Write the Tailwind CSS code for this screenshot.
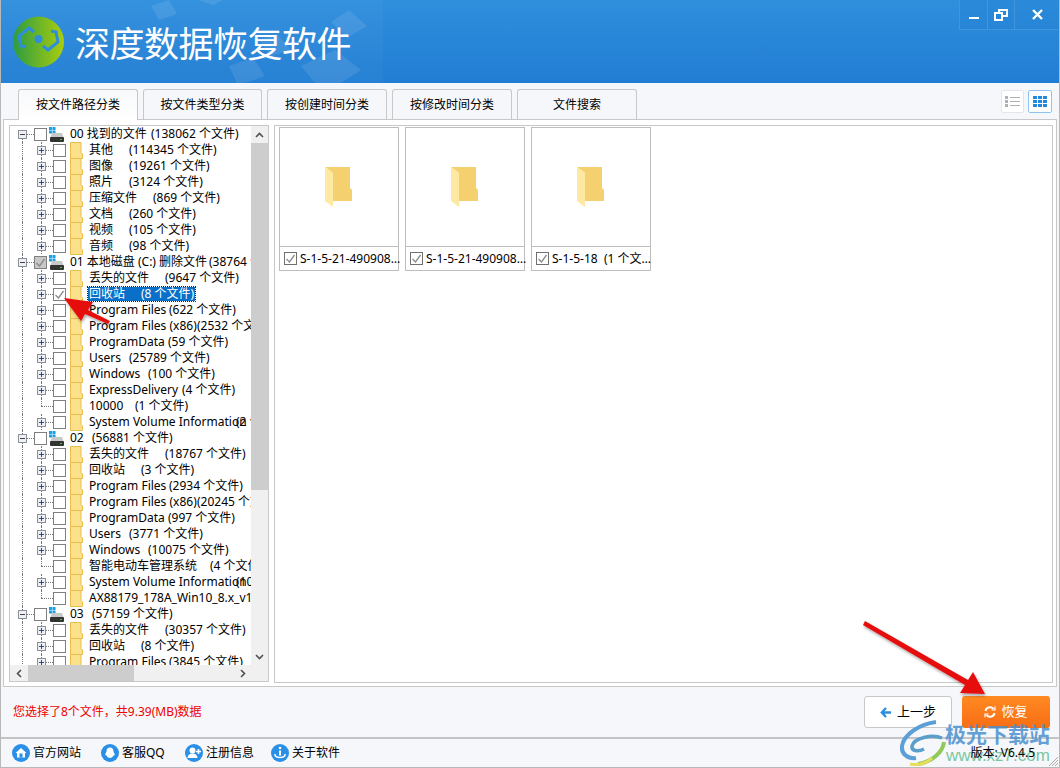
<!doctype html>
<html lang="zh">
<head>
<meta charset="UTF-8" />
<title>深度数据恢复软件</title>
<script src="https://cdn.jsdelivr.net/npm/@tailwindcss/browser@4"></script>
</head>
<body class="bg-white">
<div class="relative w-[1060px] h-[768px] overflow-hidden flex flex-col bg-[#f5f7fa] text-[12px] text-black font-['Noto_Sans','Noto_Sans_CJK_SC',sans-serif] border-l border-r border-b border-[#b8b8b8]">

    <!-- header -->
    <div class="relative h-[83px] shrink-0 flex items-center bg-gradient-to-b from-[#2f8fdd] to-[#217dd3]">
        <svg class="absolute left-0 top-0" width="382" height="83" viewBox="0 0 382 83">
            <rect width="382" height="83" fill="#fff" opacity="0.03" />
            <g fill="#fff" opacity="0.09">
                <polygon points="150,6 168,0 176,14 158,20" />
                <polygon points="198,0 222,0 212,5" />
                <polygon points="330,22 348,10 366,26 346,38" />
                <polygon points="228,66 252,58 264,76 244,83 236,83" />
                <polygon points="300,66 334,50 360,70 340,83 314,83" />
                <polygon points="258,40 276,34 290,50 270,56" />
            </g>
        </svg>
        <svg class="relative ml-[11px] shrink-0" width="54" height="54" viewBox="11 17 54 54">
            <defs>
                <linearGradient id="lg" x1="0" y1="0" x2="1" y2="0">
                    <stop offset="0" stop-color="#2c9c42" />
                    <stop offset="1" stop-color="#aacd0e" />
                </linearGradient>
            </defs>
            <circle cx="37.5" cy="44" r="25.5" fill="url(#lg)" />
            <circle cx="37.5" cy="41" r="4" fill="#2f8edb" />
            <polyline points="50,33 55,34 57,44 47,52 42,48" fill="none" stroke="#2f8edb" stroke-width="3" />
            <polyline points="25,49 20,48 18,38 28,30 33,34" fill="none" stroke="#2f8edb" stroke-width="3" />
        </svg>
        <h1 class="relative ml-[9px] text-[35px] leading-none text-white font-['Noto_Sans_CJK_SC',sans-serif] font-normal tracking-[-0.5px]">深度数据恢复软件</h1>

        <!-- window buttons -->
        <div class="absolute right-0 top-0 h-[30px] flex border-l border-b border-[#4a9be0]/70 bg-[#217fd2]/30">
            <div class="w-[28px] flex items-center justify-center border-r border-[#4a9be0]/70">
                <div class="w-[10px] h-[2px] mt-[6px] bg-white"></div>
            </div>
            <div class="w-[27px] flex items-center justify-center border-r border-[#4a9be0]/70">
                <svg width="14" height="12" viewBox="0 0 14 12" fill="none" stroke="#fff" stroke-width="2">
                    <rect x="5" y="1" width="8" height="6" />
                    <rect x="1" y="4" width="7" height="7" fill="#2585d6" />
                </svg>
            </div>
            <div class="w-[44px] flex items-center justify-center">
                <svg width="11" height="11" viewBox="0 0 11 11" stroke="#fff" stroke-width="2.4">
                    <path d="M1 1 10 10M10 1 1 10" />
                </svg>
            </div>
        </div>
    </div>

    <!-- tabs -->
    <div class="relative h-[36px] shrink-0 flex items-end pl-[17px] gap-[5px] text-[12px] z-10">
        <div class="w-[120px] h-[31px] mb-[-1px] flex items-center justify-center bg-gradient-to-b from-[#f8f9fb] to-white border border-b-0 border-[#c8c8c8] rounded-t-[3px]">按文件路径分类</div>
        <div class="w-[119px] h-[30px] flex items-center justify-center bg-[#f5f7fa] border border-b-0 border-[#c8c8c8] rounded-t-[3px]">按文件类型分类</div>
        <div class="w-[120px] h-[30px] flex items-center justify-center bg-[#f5f7fa] border border-b-0 border-[#c8c8c8] rounded-t-[3px]">按创建时间分类</div>
        <div class="w-[120px] h-[30px] flex items-center justify-center bg-[#f5f7fa] border border-b-0 border-[#c8c8c8] rounded-t-[3px]">按修改时间分类</div>
        <div class="w-[120px] h-[30px] flex items-center justify-center bg-[#f5f7fa] border border-b-0 border-[#c8c8c8] rounded-t-[3px]">文件搜索</div>
        <div class="ml-auto mr-[7px] mb-[6px] flex gap-[4px]">
            <div class="w-[23px] h-[23px] flex items-center justify-center bg-white border border-[#e4e6ea] rounded-[2px]">
                <svg width="15" height="12" viewBox="0 0 15 12">
                    <g fill="#adb0b5"><rect x="0" y="0" width="3" height="3" /><rect x="0" y="4" width="3" height="3" /><rect x="0" y="8" width="3" height="3" /></g>
                    <g fill="#adb0b5"><rect x="5" y="1" width="10" height="1" /><rect x="5" y="5" width="10" height="1" /><rect x="5" y="9" width="10" height="1" /></g>
                </svg>
            </div>
            <div class="w-[24px] h-[23px] flex items-center justify-center bg-white border border-[#8cc4f5] rounded-[2px]">
                <svg width="14" height="11" viewBox="0 0 14 11" fill="#2288e0">
                    <rect x="0" y="0" width="4" height="3" /><rect x="5" y="0" width="4" height="3" /><rect x="10" y="0" width="4" height="3" />
                    <rect x="0" y="4" width="4" height="3" /><rect x="5" y="4" width="4" height="3" /><rect x="10" y="4" width="4" height="3" />
                    <rect x="0" y="8" width="4" height="3" /><rect x="5" y="8" width="4" height="3" /><rect x="10" y="8" width="4" height="3" />
                </svg>
            </div>
        </div>
    </div>

    <!-- main frame -->
    <div class="h-[568px] shrink-0 ml-[2px] mr-[2px] flex gap-[5px] pl-[5px] pr-[4px] pt-[5px] bg-white border border-[#c8c8c8]">
        <!-- tree panel -->
        <div class="w-[260px] h-[557px] shrink-0 flex flex-col border border-[#c8c8c8]">
            <div class="flex h-[539px] shrink-0">
                <div id="tree" class="w-[241px] h-[539px] overflow-hidden bg-white"></div>
                <div class="w-[17px] flex flex-col bg-[#f0f0f0]">
                    <div class="h-[17px] flex items-center justify-center">
                        <svg width="9" height="6" viewBox="0 0 9 6" fill="none" stroke="#505050" stroke-width="1.6"><path d="M1 5 4.500 1.500 8 5" /></svg>
                    </div>
                    <div class="h-[347px] bg-[#cdcdcd]"></div>
                    <div class="flex-1"></div>
                    <div class="h-[17px] flex items-center justify-center">
                        <svg width="9" height="6" viewBox="0 0 9 6" fill="none" stroke="#505050" stroke-width="1.6"><path d="M1 1 4.500 4.500 8 1" /></svg>
                    </div>
                </div>
            </div>
            <div class="h-[16px] flex bg-[#f0f0f0]">
                <div class="w-[18px] flex items-center justify-center">
                    <svg width="6" height="9" viewBox="0 0 6 9" fill="none" stroke="#505050" stroke-width="1.6"><path d="M5 1 1.500 4.500 5 8" /></svg>
                </div>
                <div class="w-[106px] bg-[#cdcdcd]"></div>
                <div class="w-[117px] flex items-center justify-end pr-[5px]">
                    <svg width="6" height="9" viewBox="0 0 6 9" fill="none" stroke="#505050" stroke-width="1.6"><path d="M1 1 4.500 4.500 1 8" /></svg>
                </div>
            </div>
        </div>

        <!-- file panel -->
        <div class="w-[779px] h-[558px] shrink-0 flex gap-[6px] items-start pl-[4px] pt-[1px] bg-white border border-[#c8c8c8]">
            <div class="w-[120px] h-[144px] flex flex-col border border-[#bdbdbd]">
                <div class="h-[119px] flex items-center justify-center border-b border-[#bdbdbd]">
                    <svg width="28" height="41" viewBox="0 0 28 41"><polygon points="0,0 25,0 25,21 27,23 27,34 8,34 8,6" fill="#f4d06f" /><polygon points="0,0 8,6 8,40 0,34" fill="#fde9a2" /></svg>
                </div>
                <div class="flex-1 flex items-center pl-[4px]">
                    <span class="w-[13px] h-[13px] shrink-0 flex items-center justify-center border border-[#707070]"><svg width="11" height="11" viewBox="0 0 11 11" fill="none" stroke="#8a8a8a" stroke-width="1.300"><path d="M1.500 6 4.500 9 9.500 2" /></svg></span>
                    <span class="ml-[3px] whitespace-nowrap">S-1-5-21-490908…</span>
                </div>
            </div>
            <div class="w-[120px] h-[144px] flex flex-col border border-[#bdbdbd]">
                <div class="h-[119px] flex items-center justify-center border-b border-[#bdbdbd]">
                    <svg width="28" height="41" viewBox="0 0 28 41"><polygon points="0,0 25,0 25,21 27,23 27,34 8,34 8,6" fill="#f4d06f" /><polygon points="0,0 8,6 8,40 0,34" fill="#fde9a2" /></svg>
                </div>
                <div class="flex-1 flex items-center pl-[4px]">
                    <span class="w-[13px] h-[13px] shrink-0 flex items-center justify-center border border-[#707070]"><svg width="11" height="11" viewBox="0 0 11 11" fill="none" stroke="#8a8a8a" stroke-width="1.300"><path d="M1.500 6 4.500 9 9.500 2" /></svg></span>
                    <span class="ml-[3px] whitespace-nowrap">S-1-5-21-490908…</span>
                </div>
            </div>
            <div class="w-[120px] h-[144px] flex flex-col border border-[#bdbdbd]">
                <div class="h-[119px] flex items-center justify-center border-b border-[#bdbdbd]">
                    <svg width="28" height="41" viewBox="0 0 28 41"><polygon points="0,0 25,0 25,21 27,23 27,34 8,34 8,6" fill="#f4d06f" /><polygon points="0,0 8,6 8,40 0,34" fill="#fde9a2" /></svg>
                </div>
                <div class="flex-1 flex items-center pl-[4px]">
                    <span class="w-[13px] h-[13px] shrink-0 flex items-center justify-center border border-[#707070]"><svg width="11" height="11" viewBox="0 0 11 11" fill="none" stroke="#8a8a8a" stroke-width="1.300"><path d="M1.500 6 4.500 9 9.500 2" /></svg></span>
                    <span class="ml-[3px] whitespace-nowrap">S-1-5-18&nbsp;&nbsp;(1 个文…</span>
                </div>
            </div>
        </div>
    </div>

    <!-- action bar -->
    <div class="h-[50px] shrink-0 flex items-center pl-[12px] pr-[9px]">
        <span class="text-[#f00000]">您选择了8个文件，共9.39(MB)数据</span>
        <button class="ml-auto w-[88px] h-[32px] flex items-center justify-center gap-[5px] bg-white border border-[#c8c8c8] rounded-[3px] text-[13px]">
            <svg width="12" height="11" viewBox="0 0 12 11" fill="none" stroke="#2b8fe0" stroke-width="2.400"><path d="M11 5.500H3M6 1 1.800 5.500 6 10" /></svg>
            上一步
        </button>
        <button class="ml-[10px] w-[88px] h-[32px] flex items-center justify-center gap-[5px] bg-gradient-to-b from-[#ff8a22] to-[#f86d14] rounded-[3px] text-white text-[13px]">
            <svg width="12" height="12" viewBox="0 0 12 12" fill="none" stroke="#fff" stroke-width="2"><path d="M1.500 5A4.500 4.500 0 0 1 9.500 3M10.500 7A4.500 4.500 0 0 1 2.500 9" /><path d="M7.500 4h3.500V.5M4.500 8H1v3.500" stroke-width="1.200" /></svg>
            恢复
        </button>
    </div>

    <!-- status bar -->
    <div class="relative flex-1 flex items-center pl-[11px] border-t-2 border-[#c4c4c4]">
        <div class="w-[89px] flex items-center gap-[3px]">
            <svg width="18" height="18" viewBox="0 0 18 18"><circle cx="9" cy="9" r="9" fill="#2a8fe6" /><path d="M9 4 3.500 9h1.500v4.500h8V9h1.500z" fill="#fff" /><rect x="7.500" y="9.500" width="3" height="4" fill="#2a8fe6" /></svg>
            <span>官方网站</span>
        </div>
        <div class="w-[84px] flex items-center gap-[3px]">
            <svg width="18" height="18" viewBox="0 0 18 18"><circle cx="9" cy="9" r="9" fill="#2a8fe6" /><path d="M9 3.500c-2.500 0-3.500 2-3.500 4l-1.500 3.500 1.200.3c1 1.700 2.400 2.700 3.800 2.700s2.800-1 3.800-2.700l1.200-.3-1.500-3.500c0-2-1-4-3.500-4z" fill="#fff" /></svg>
            <span>客服QQ</span>
        </div>
        <div class="w-[86px] flex items-center gap-[3px]">
            <svg width="18" height="18" viewBox="0 0 18 18"><circle cx="9" cy="9" r="9" fill="#2a8fe6" /><circle cx="7.500" cy="6.500" r="3" fill="#fff" /><path d="M2.500 14c0-3 2-4.500 5-4.500s5 1.500 5 4.500z" fill="#fff" /><path d="M13.500 5v5M11 7.500h5" stroke="#fff" stroke-width="1.600" /></svg>
            <span>注册信息</span>
        </div>
        <div class="flex items-center gap-[3px]">
            <svg width="18" height="18" viewBox="0 0 18 18"><circle cx="9" cy="9" r="9" fill="#2a8fe6" /><circle cx="9" cy="4" r="1.300" fill="#fff" /><path d="M9 6.500v5" stroke="#fff" stroke-width="2" /><path d="M4 10c-.5 2.500 2 3.500 5 3.500s5.500-1 5-3.500" fill="none" stroke="#fff" stroke-width="1.600" /></svg>
            <span>关于软件</span>
        </div>
        <span class="ml-auto mr-[24px] relative z-20">版本: V6.4.5</span>
        <svg class="absolute right-[1px] bottom-[1px]" width="9" height="9" viewBox="0 0 9 9" stroke="#a8a8a8" stroke-width="1"><path d="M9 0 0 9M9 3 3 9M9 6 6 9" /></svg>
    </div>

    <!-- watermark -->
    <div class="absolute left-[899px] top-[720px] w-[160px] h-[48px] z-10 pointer-events-none">
        <svg class="absolute left-0 top-0" width="46" height="48" viewBox="0 0 46 48" fill="none">
            <path d="M36 2C20 4 4 14 2 26c-1 8 6 13 14 12" stroke="#5b9fd6" stroke-width="4" />
            <path d="M42 18C32 14 14 18 12 26c-1 5 6 6 12 3" stroke="#5a9ecb" stroke-width="3.500" />
            <path d="M44 22c-1 10-12 20-26 22" stroke="#8fc95a" stroke-width="4" />
            <path d="M10 44c10 2 18-2 22-6" stroke="#e7dc5c" stroke-width="3" />
        </svg>
        <span class="absolute left-[45px] top-[1px] text-[21px] leading-[24px] font-bold text-[#4a90d0]/85 whitespace-nowrap font-['Noto_Sans_CJK_SC',sans-serif]">极光下载站</span>
        <span class="absolute left-[46px] top-[25px] text-[17px] leading-[22px] text-[#58b98a]/80 whitespace-nowrap font-['Liberation_Sans',sans-serif]">www.xz7.com</span>
    </div>

    <!-- red arrows -->
    <svg class="absolute left-0 top-0 z-20 pointer-events-none" width="1060" height="768" viewBox="0 0 1060 768">
        <defs>
            <filter id="sh" x="-20%" y="-20%" width="140%" height="140%"><feDropShadow dx="1" dy="2" stdDeviation="1.500" flood-color="#000" flood-opacity="0.35" /></filter>
        </defs>
        <g fill="#e60d0d" filter="url(#sh)">
            <polygon points="63,298 92,302 87,310 109,321 107,324 84,314 80,321" />
            <polygon points="984,694 959,693 964,685 862,625 864,621 967,680 972,672" />
        </g>
    </svg>
</div>

<script>
    const tree = document.getElementById("tree");
    // [type, name, name width, count] type: r root, c child, l child without expander
    const rows = [
        ["r", "00 找到的文件", 81, "(138062 个文件)"],
        ["c", "其他", 40, "(114345 个文件)"],
        ["c", "图像", 40, "(19261 个文件)"],
        ["c", "照片", 40, "(3124 个文件)"],
        ["c", "压缩文件", 64, "(869 个文件)"],
        ["c", "文档", 40, "(260 个文件)"],
        ["c", "视频", 40, "(105 个文件)"],
        ["c", "音频", 40, "(98 个文件)"],
        ["r", "01 本地磁盘 (C:) 删除文件", 139, "(38764 个文件)", "checked"],
        ["c", "丢失的文件", 76, "(9647 个文件)"],
        ["c", "回收站", 52, "(8 个文件)", "selected"],
        ["c", "Program Files", 80, "(622 个文件)"],
        ["c", "Program Files (x86)", 108, "(2532 个文件)"],
        ["c", "ProgramData", 79, "(59 个文件)"],
        ["c", "Users", 40, "(25789 个文件)"],
        ["c", "Windows", 59, "(100 个文件)"],
        ["c", "ExpressDelivery", 93, "(4 个文件)"],
        ["l", "10000", 46, "(1 个文件)"],
        ["c", "System Volume Information", 147, "(2 个文件)"],
        ["r", "02", 22, "(56881 个文件)"],
        ["c", "丢失的文件", 76, "(18767 个文件)"],
        ["c", "回收站", 52, "(3 个文件)"],
        ["c", "Program Files", 80, "(2934 个文件)"],
        ["c", "Program Files (x86)", 108, "(20245 个文件)"],
        ["c", "ProgramData", 79, "(997 个文件)"],
        ["c", "Users", 40, "(3771 个文件)"],
        ["c", "Windows", 59, "(10075 个文件)"],
        ["l", "智能电动车管理系统", 121, "(4 个文件)"],
        ["c", "System Volume Information", 147, "(10 个文件)"],
        ["l", "AX88179_178A_Win10_8.x_v1.18", 200, ""],
        ["r", "03", 22, "(57159 个文件)"],
        ["c", "丢失的文件", 76, "(30357 个文件)"],
        ["c", "回收站", 52, "(8 个文件)"],
        ["c", "Program Files", 80, "(3845 个文件)"],
    ];

    const check = '<svg width="11" height="11" viewBox="0 0 11 11" fill="none" stroke="#8a8a8a" stroke-width="1.300"><path d="M1.500 6 4.500 9 9.500 2" /></svg>';
    const driveIcon = '<svg class="shrink-0 ml-[2px]" width="15" height="15" viewBox="0 0 15 15"><g fill="#18a0ea"><rect x="0" y="0" width="3" height="3" /><rect x="3.500" y="0" width="3" height="3" /><rect x="0" y="3.500" width="3" height="3" /><rect x="3.500" y="3.500" width="3" height="3" /></g><path d="M3 6h10l1.500 4H1.500z" fill="#c9c9c9" /><rect x="1" y="10" width="14" height="5" rx="1" fill="#333" /><rect x="11" y="12" width="2" height="1" fill="#3ad04a" /></svg>';
    const folderIcon = '<svg class="shrink-0 ml-[4px]" width="13" height="17" viewBox="0 0 13 17"><path d="M.5 .5h10.500v10l1.500 1.500v4.500H.5z" fill="#fde08c" stroke="#e7bd4c" /></svg>';
    const plusBox = '<span class="relative w-[9px] h-[9px] shrink-0 bg-[#eef0f4] border border-[#8a8f99] flex items-center justify-center"><svg width="7" height="7" viewBox="0 0 7 7" stroke="#2a4a8a" stroke-width="1"><path d="M3.500 1v5M1 3.500h5" /></svg></span>';
    const minusBox = '<span class="relative w-[9px] h-[9px] shrink-0 bg-[#eef0f4] border border-[#8a8f99] flex items-center justify-center"><svg width="7" height="7" viewBox="0 0 7 7" stroke="#444" stroke-width="1"><path d="M1 3.500h5" /></svg></span>';

    function checkbox(row) {
        if (row[4] === "checked")
            return '<span class="w-[13px] h-[13px] shrink-0 flex items-center justify-center bg-[#c8c8c8] border border-[#808080]">' + check + "</span>";
        if (row[4] === "selected")
            return '<span class="w-[13px] h-[13px] shrink-0 flex items-center justify-center bg-white border border-[#808080]">' + check + "</span>";
        return '<span class="w-[13px] h-[13px] shrink-0 bg-white border border-[#808080]"></span>';
    }

    rows.forEach((row, i) => {
        const type = row[0];
        const div = document.createElement("div");
        div.className = "relative flex items-center h-[16px] whitespace-nowrap";
        let html = "";
        const label = '<span class="shrink-0 inline-block" style="width:' + row[2] + 'px">' + row[1] + "</span><span class=\"shrink-0\">" + row[3] + "</span>";
        const guide = '<span class="absolute left-[12px] top-0 h-[16px] border-l border-dotted border-[#777]"></span>';
        if (type === "r") {
            html = (i > 0 ? guide : '<span class="absolute left-[12px] top-[8px] h-[8px] border-l border-dotted border-[#777]"></span>') +
                '<span class="ml-[8px] flex items-center">' + minusBox + '</span><span class="w-[7px] shrink-0 border-t border-dotted border-[#777]"></span>' +
                checkbox(row) + driveIcon + '<span class="ml-[6px] flex">' + label + "</span>";
        } else {
            const box = type === "c" ? plusBox : '<span class="w-[9px] shrink-0"></span>';
            const stem = type === "l"
                ? '<span class="absolute left-[31px] top-0 h-[8px] border-l border-dotted border-[#777]"></span>'
                : '<span class="absolute left-[31px] top-0 h-[16px] border-l border-dotted border-[#777]"></span>';
            const joint = type === "l"
                ? '<span class="absolute left-[31px] top-[8px] w-[12px] border-t border-dotted border-[#777]"></span>'
                : '<span class="w-[7px] shrink-0 border-t border-dotted border-[#777]"></span>';
            const text = row[4] === "selected"
                ? '<span class="ml-[5px] pl-[1px] pr-[1px] h-[14px] flex items-center bg-[#0a6fc9] text-white outline outline-1 outline-dotted outline-[#222]">' + label + "</span>"
                : '<span class="ml-[6px] flex">' + label + "</span>";
            html = guide + stem + '<span class="ml-[27px] flex items-center">' + box + "</span>" +
                (type === "l" ? '<span class="w-[7px] shrink-0"></span>' + joint : joint) +
                checkbox(row) + folderIcon + text;
        }
        div.innerHTML = html;
        tree.appendChild(div);
    });
</script>
</body>
</html>
